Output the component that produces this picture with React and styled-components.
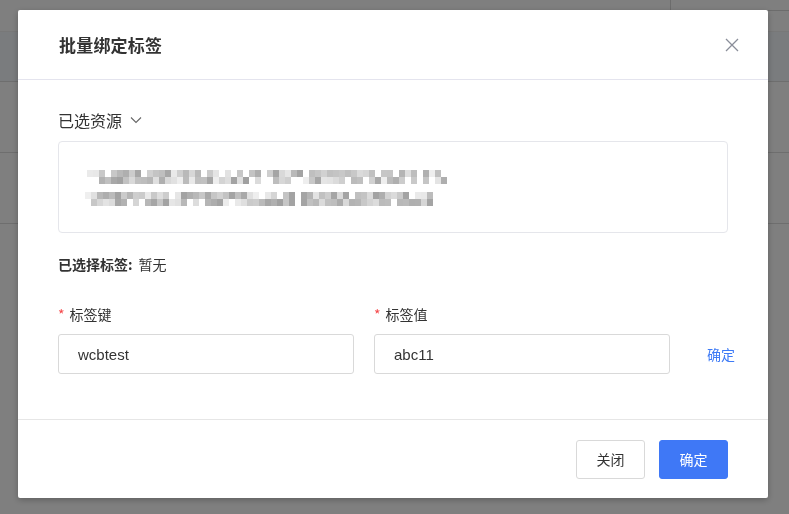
import React from "react";
import styled, { createGlobalStyle } from "styled-components";

const GlobalStyle = createGlobalStyle`
  html, body {
    margin: 0;
    padding: 0;
    width: 789px;
    height: 514px;
    overflow: hidden;
    font-family: "Noto Sans CJK SC", "Noto Sans", "Liberation Sans", sans-serif;
    background: #ffffff;
  }
`;

const Page = styled.div`
  width: 789px;
  height: 514px;
  background: #ffffff;
`,
  PageTop = styled.div`
    height: 31px;
    display: flex;
    justify-content: flex-end;
  `,
  TopBox = styled.div`
    width: 118px;
    height: 10px;
    border-left: 1px solid #d8d8d8;
    border-bottom: 1px solid #d8d8d8;
  `,
  TableHead = styled.div`
    height: 49px;
    background: #f5f8fc;
    border-top: 1px solid #f0f0f0;
    border-bottom: 1px solid #dcdcdc;
  `,
  TableRow = styled.div`
    height: 70px;
    border-bottom: 1px solid #dcdcdc;
  `;

const Overlay = styled.div`
    position: fixed;
    inset: 0;
    background: rgba(0, 0, 0, 0.5);
    display: flex;
    align-items: flex-start;
    padding: 10px 0 0 18px;
  `,
  Modal = styled.div`
    width: 750px;
    background: #ffffff;
    border-radius: 2px;
    box-shadow: 0 2px 6px rgba(0, 0, 0, 0.25);
    display: flex;
    flex-direction: column;
  `,
  Header = styled.div`
    height: 69px;
    padding: 0 28px 0 41px;
    display: flex;
    align-items: center;
    justify-content: space-between;
    border-bottom: 1px solid #e4e4ee;
  `,
  Title = styled.div`
    font-size: 17px;
    font-weight: 700;
    color: #333333;
    letter-spacing: 0.2px;
  `,
  CloseBtn = styled.div`
    width: 16px;
    height: 16px;
    display: flex;
    align-items: center;
    justify-content: center;
    cursor: pointer;
  `,
  Body = styled.div`
    padding: 28px 40px 45px 40px;
  `,
  SectionTitle = styled.div`
    display: flex;
    align-items: center;
    gap: 8px;
    height: 24px;
    font-size: 16px;
    color: #333333;
  `,
  ResourceBox = styled.div`
    margin-top: 9px;
    height: 92px;
    border: 1px solid #e5e6eb;
    border-radius: 4px;
    padding: 28px 0 0 26px;
    box-sizing: border-box;
  `,
  Selected = styled.div`
    margin-top: 20px;
    height: 22px;
    line-height: 22px;
    font-size: 14px;
    color: #333333;
    & > span {
      font-weight: 700;
      margin-right: 6px;
    }
  `,
  FormRow = styled.div`
    margin-top: 28px;
    display: flex;
    align-items: flex-end;
    gap: 20px;
  `,
  Field = styled.div`
    width: 296px;
    flex-shrink: 0;
    display: flex;
    flex-direction: column;
    gap: 9px;
  `,
  Label = styled.div`
    height: 22px;
    line-height: 22px;
    font-size: 14px;
    color: #333333;
    & > em {
      font-style: normal;
      color: #f5484a;
      margin-right: 5px;
    }
  `,
  Input = styled.input`
    width: 100%;
    height: 40px;
    box-sizing: border-box;
    border: 1px solid #d9d9d9;
    border-radius: 3px;
    padding: 0 19px;
    font-family: "Liberation Sans", "Noto Sans CJK SC", sans-serif;
    font-size: 15px;
    color: #333333;
    outline: none;
  `,
  LinkBtn = styled.div`
    height: 40px;
    line-height: 40px;
    margin-left: 17px;
    white-space: nowrap;
    flex-shrink: 0;
    font-size: 14px;
    color: #3d7af6;
    cursor: pointer;
  `,
  Footer = styled.div`
    height: 78px;
    border-top: 1px solid #e6e6e6;
    display: flex;
    align-items: center;
    justify-content: flex-end;
    gap: 14px;
    padding: 0 40px;
  `,
  Button = styled.button`
    width: 69px;
    height: 39px;
    border-radius: 3px;
    font-family: "Noto Sans CJK SC", sans-serif;
    font-size: 14px;
    cursor: pointer;
    border: 1px solid ${(p) => (p.primary ? "#3f78f6" : "#d9d9d9")};
    background: ${(p) => (p.primary ? "#3f78f6" : "#ffffff")};
    color: ${(p) => (p.primary ? "#ffffff" : "#333333")};
  `;

// mosaic of the blurred resource id
const Mosaic = () => {
  let seed = 17;
  const rnd = () => {
    seed = (seed * 9301 + 49297) % 233280;
    return seed / 233280;
  };
  const lines = [
    { x0: 2, x1: 360, y: 0 },
    { x0: 0, x1: 348, y: 22 },
  ];
  const rects = [];
  lines.forEach((ln, li) => {
    for (let x = ln.x0; x < ln.x1; x += 6) {
      for (let r = 0; r < 2; r++) {
        const v = rnd();
        if (v < 0.15) continue;
        const g = Math.round(160 + rnd() * 80);
        rects.push(
          <rect
            key={`${li}-${x}-${r}`}
            x={x}
            y={ln.y + r * 7}
            width="6"
            height="7"
            fill={`rgb(${g},${g},${g})`}
          />
        );
      }
    }
  });
  return (
    <svg width="362" height="37" viewBox="0 0 362 37">
      {rects}
    </svg>
  );
};

const App = () => {
  return (
    <>
      <GlobalStyle />
      <Page>
        <PageTop>
          <TopBox />
        </PageTop>
        <TableHead />
        <TableRow />
        <TableRow />
      </Page>
      <Overlay>
        <Modal>
          <Header>
            <Title>批量绑定标签</Title>
            <CloseBtn>
              <svg width="14" height="14" viewBox="0 0 14 14">
                <path d="M1 1 L13 13 M13 1 L1 13" stroke="#8a8e99" strokeWidth="1.3" fill="none" />
              </svg>
            </CloseBtn>
          </Header>
          <Body>
            <SectionTitle>
              已选资源
              <svg width="12" height="8" viewBox="0 0 12 8">
                <path d="M1 1.5 L6 6.5 L11 1.5" stroke="#666" strokeWidth="1.1" fill="none" />
              </svg>
            </SectionTitle>
            <ResourceBox>
              <Mosaic />
            </ResourceBox>
            <Selected>
              <span>已选择标签:</span>暂无
            </Selected>
            <FormRow>
              <Field>
                <Label>
                  <em>*</em>标签键
                </Label>
                <Input defaultValue="wcbtest" />
              </Field>
              <Field>
                <Label>
                  <em>*</em>标签值
                </Label>
                <Input defaultValue="abc11" />
              </Field>
              <LinkBtn>确定</LinkBtn>
            </FormRow>
          </Body>
          <Footer>
            <Button>关闭</Button>
            <Button primary>确定</Button>
          </Footer>
        </Modal>
      </Overlay>
    </>
  );
};

export default App;
